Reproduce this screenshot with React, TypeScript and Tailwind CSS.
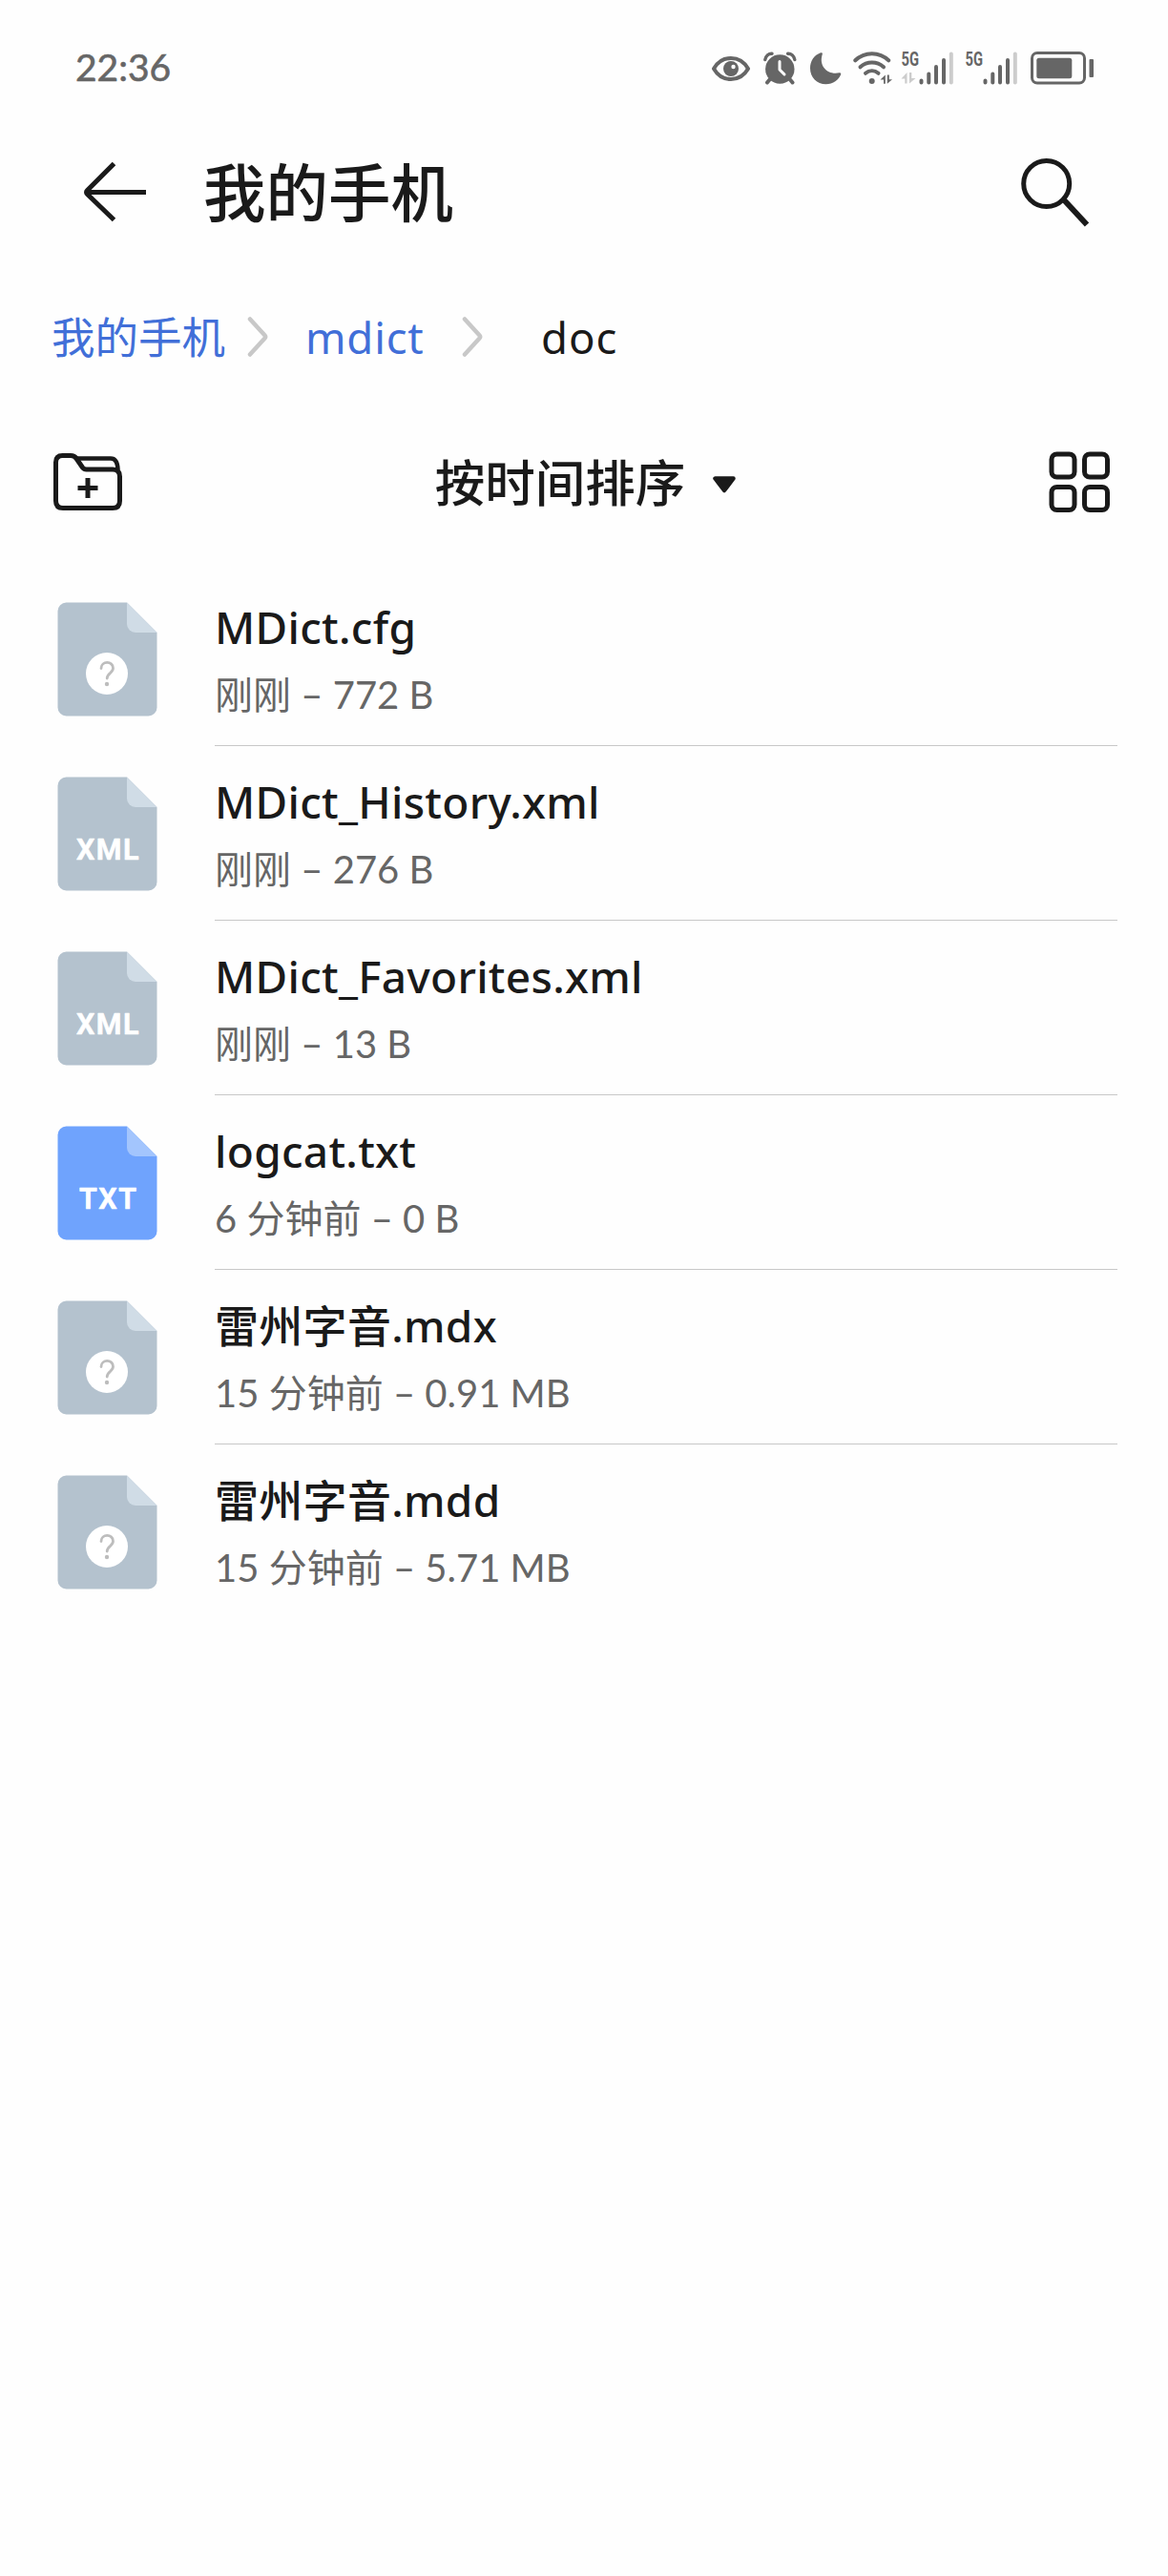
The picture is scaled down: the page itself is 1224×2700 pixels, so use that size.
import React from "react";

const INK = "#1a1a1a";
const GREY = "#666666";

function Eye() {
  return (
    <svg width="42" height="36" viewBox="0 0 42 36" fill="none">
      <path d="M3 19C7 12 13 8 21 8s14 4 18 11c-4 7-10 11-18 11S7 26 3 19Z" stroke={GREY} strokeWidth="4" strokeLinejoin="round" />
      <circle cx="21" cy="19" r="8" fill={GREY} />
      <circle cx="23.5" cy="17" r="2.2" fill="#fff" />
    </svg>
  );
}

function Alarm() {
  return (
    <svg width="35" height="36" viewBox="0 0 35 36" fill="none">
      <circle cx="17.3" cy="19.5" r="15.2" fill={GREY} />
      <path d="M1.800 9.500C2.600 5.500 5.500 3 9 3.200M32.800 9.500C32 5.500 29.100 3 25.600 3.200" stroke={GREY} strokeWidth="3.4" strokeLinecap="round" />
      <path d="M6.500 30.500 4 33.500M28 30.500l2.500 3" stroke={GREY} strokeWidth="4" strokeLinecap="round" />
      <path d="M17 11.500V20l5 5" stroke="#fff" strokeWidth="3" strokeLinecap="round" strokeLinejoin="round" />
    </svg>
  );
}

function Moon() {
  return (
    <svg width="34" height="36" viewBox="0 0 34 36">
      <path d="M12 2.300C5 5 1 11 1 18.500 1 28 8 35.300 17.500 35.300c7.500 0 13.500-4.500 15.700-10.300.4-1.200-.5-2-1.600-1.700C20 26 9.500 17 13.800 3.800c.4-1.200-.6-2-1.800-1.500Z" fill={GREY} />
    </svg>
  );
}

function UpDown({ color }: { color: string }) {
  return (
    <g fill={color} stroke={color} strokeWidth=".6" strokeLinejoin="round">
      <path d="M4.800 0v9.300H3V6H0Z" />
      <path d="M7.600 9.300V0h1.800v3.300h3Z" transform="matrix(1 0 0 -1 0 9.300)" />
    </g>
  );
}

function Wifi() {
  return (
    <svg width="42" height="36" viewBox="0 0 42 36" fill="none">
      <g stroke={GREY} strokeWidth="4" strokeLinecap="round">
        <path d="M2.300 10.300C12 .8 27.500.8 37.200 10.300" />
        <path d="M7.500 17.300c7-6.300 17.500-6.300 24.500 0" />
        <path d="M13 23.800c4-3.300 9.500-3.300 13.500 0" />
      </g>
      <circle cx="19.700" cy="32" r="3" fill={GREY} />
      <g transform="translate(28.500 25.500)">
        <path d="M5.300 0v9.300H3.500V5H0ZM7.300 0v9.300L12.500 4.800H9.300V0Z" fill={GREY} />
      </g>
    </svg>
  );
}

function Signal({ data }: { data?: boolean }) {
  return (
    <svg className="-mt-2" width="56" height="44" viewBox="0 -8 56 44" fill="none">
      <text x=".5" y="15.800" fontSize="20" fontWeight="700" fontFamily="Roboto" fill={GREY} textLength="18.500" lengthAdjust="spacingAndGlyphs">5G</text>
      {data && <path d="M6.500 23v11.500H4.300V29.500H.5ZM9 23v11.500L15.500 29H11.300V23Z" fill="#cccccc" />}
      <g stroke={GREY} strokeWidth="4" strokeLinecap="round">
        <path d="M21.500 31.500v2M29.300 24.500v9M37 17v16.500M45 10v23.500" />
        <path d="M52.800 3.500v30" stroke="#cccccc" />
      </g>
    </svg>
  );
}

function Battery() {
  return (
    <svg width="67" height="36" viewBox="0 0 67 36" fill="none">
      <rect x="1.500" y="2.500" width="55" height="31.500" rx="5.500" stroke={GREY} strokeWidth="3" />
      <rect x="6.300" y="7.700" width="37" height="21.500" rx="2.500" fill={GREY} />
      <rect x="61.500" y="9" width="4.500" height="19" rx="1" fill={GREY} />
    </svg>
  );
}

function Chevron() {
  return (
    <svg width="22" height="44" viewBox="0 0 22 44" fill="none">
      <path d="M3 3.500 18.500 20.500q1.300 1.500 0 3L3 40.500" stroke="#c8c8c8" strokeWidth="4.500" strokeLinecap="round" />
    </svg>
  );
}

function FileIcon({ kind }: { kind: string }) {
  const txt = kind === "TXT";
  return (
    <svg width="105" height="120" viewBox="0 0 105 120">
      <path d="M9.500 .5H73L104.500 32V110.500a9 9 0 0 1-9 9H9.500a9 9 0 0 1-9-9V9.500a9 9 0 0 1 9-9Z" fill={txt ? "#6fa3fd" : "#b4c2ce"} />
      <path d="M73 .5 104.500 32H82a9 9 0 0 1-9-9Z" fill={txt ? "#a3c5fd" : "#d0dce6"} />
      {kind === "?" ? (
        <>
          <circle cx="52" cy="75" r="22" fill="#fff" />
          <path d="M46 69.500c0-8 12.500-8 12.500-.2 0 5.500-6.300 5-6.300 10.700" fill="none" stroke="#bdbdbd" strokeWidth="2.800" strokeLinecap="round" />
          <circle cx="52" cy="86" r="2.200" fill="#bdbdbd" />
        </>
      ) : (
        <text
          x={txt ? 23 : 20}
          y="87.300"
          fontSize="30.500"
          fontWeight="600"
          fontFamily="Roboto"
          fill="#fff"
          stroke="#fff"
          strokeWidth=".7"
          strokeLinejoin="round"
          textLength={txt ? 60 : 65.5}
          lengthAdjust="spacing"
        >
          {kind}
        </text>
      )}
    </svg>
  );
}

const files = [
  { name: "MDict.cfg", meta: "刚刚 – 772 B", kind: "?" },
  { name: "MDict_History.xml", meta: "刚刚 – 276 B", kind: "XML" },
  { name: "MDict_Favorites.xml", meta: "刚刚 – 13 B", kind: "XML" },
  { name: "logcat.txt", meta: "6 分钟前 – 0 B", kind: "TXT" },
  { name: "雷州字音.mdx", meta: "15 分钟前 – 0.91 MB", kind: "?" },
  { name: "雷州字音.mdd", meta: "15 分钟前 – 5.71 MB", kind: "?" },
];

export default function App() {
  return (
    <div className="min-h-[2700px] w-[1224px] overflow-hidden bg-[#fefefe] font-['Noto_Sans','Noto_Sans_CJK_SC',sans-serif] text-[#1a1a1a]">
      <header className="flex h-[142px] items-start justify-between pl-[79px] pr-[77px] pt-[53px]">
        <span className="font-['Lato',sans-serif] text-[39px] leading-[35px] text-[#666666] [-webkit-text-stroke:0.6px_#666666]">22:36</span>
        <div className="flex items-start">
          <Eye /><span className="w-[13px]" /><Alarm /><span className="w-[13px]" /><Moon /><span className="w-[12px]" /><Wifi />
          <span className="w-[8px]" /><Signal data /><span className="w-[11px]" /><Signal /><span className="w-[13px]" /><Battery />
        </div>
      </header>
      <div className="flex h-[120px] items-center pl-[88px] pr-[82px]">
        <svg width="66" height="64" viewBox="0 0 66 64" fill="none" stroke={INK} strokeWidth="5">
          <path d="M31.500 1.500 3.500 29.500q-2 2 0 4L31.500 60.500M3 31.500h62" />
        </svg>
        <h1 className="ml-[59px] flex-1 text-[65.5px] font-medium leading-[80px]">我的手机</h1>
        <svg width="74" height="74" viewBox="0 0 74 74" fill="none" stroke={INK}>
          <circle cx="28.700" cy="27.500" r="24" strokeWidth="5" />
          <path d="M46 43.500 71 70.500" strokeWidth="6" />
        </svg>
      </div>
      <nav className="flex h-[182px] items-center pl-[54px] text-[45.5px] leading-[60px]">
        <span className="w-[205px] text-[#416fd8]">我的手机</span><Chevron />
        <span className="ml-[39px] w-[164px] tracking-[0.8px] text-[#416fd8]">mdict</span><Chevron />
        <span className="ml-[61px] tracking-[1px]">doc</span>
      </nav>
      <div className="flex h-[122px] items-center justify-between pl-[55px] pr-[60px]">
        <svg width="74" height="62" viewBox="0 0 74 62" fill="none" stroke={INK} strokeWidth="5" strokeLinejoin="round">
          <path d="M3.500 10.500q0-7 7-7H19q4 0 6 3l6.500 9.500q1.500 2 4 2H63q7.500 0 7.500 7.500V51q0 7.500-7.500 7.500H11q-7.500 0-7.500-7.500Z" />
          <path d="M26 6.500h35q7 0 7.500 11.500" strokeWidth="4.500" />
          <path d="M37 27v21M26.500 37.500h21" />
        </svg>
        <div className="flex items-center pt-0.5">
          <span className="text-[52.5px] font-medium leading-[70px]">按时间排序</span>
          <svg className="ml-[28px] mt-1" width="26" height="20" viewBox="0 0 26 20"><path d="M3.500 3.500h19L13 16Z" fill={INK} stroke={INK} strokeWidth="4.500" strokeLinejoin="round" /></svg>
        </div>
        <svg width="65" height="65" viewBox="0 0 65 65" fill="none" stroke={INK} strokeWidth="5">
          <rect x="3" y="3" width="24" height="24" rx="5.500" /><rect x="37.500" y="3" width="24" height="24" rx="5.500" />
          <rect x="3" y="37.500" width="24" height="24" rx="5.500" /><rect x="37.500" y="37.500" width="24" height="24" rx="5.500" />
        </svg>
      </div>
      <ul className="pt-[33px]">
        {files.map((f, i) => (
          <li key={f.name} className="flex h-[183px] pl-[60px] pr-[53px]">
            <div className="w-[165px] pt-[32px]"><FileIcon kind={f.kind} /></div>
            <div className={`flex-1 pt-[26px] ${i < 5 ? "border-b border-[#c8c8c8]" : ""}`}>
              <p className="text-[46px] font-medium leading-[64px] tracking-[0.3px]">{f.name}</p>
              <p className="mt-[11px] font-['Lato','Noto_Sans_CJK_SC',sans-serif] text-[40px] leading-[56px] text-[#666666]">{f.meta}</p>
            </div>
          </li>
        ))}
      </ul>
    </div>
  );
}
